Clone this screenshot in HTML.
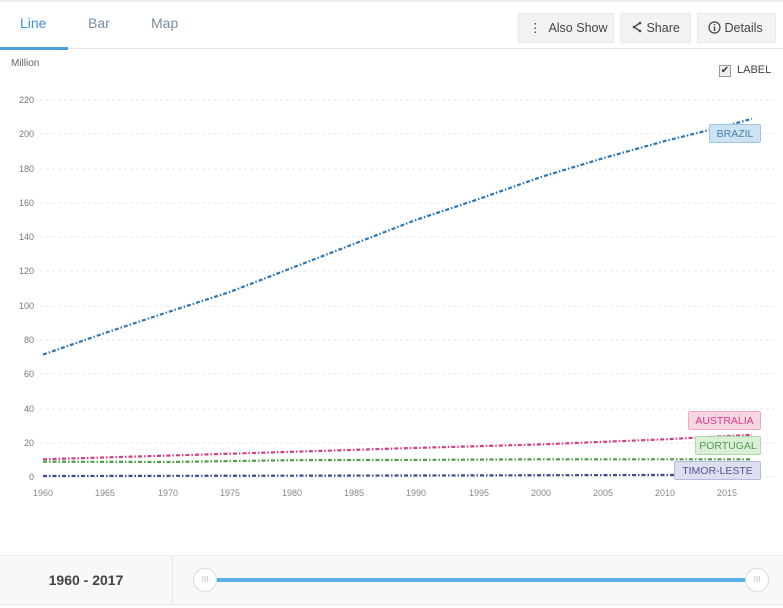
<!DOCTYPE html>
<html><head><meta charset="utf-8"><style>
*{margin:0;padding:0;box-sizing:border-box}
body{width:783px;height:608px;background:#fff;font-family:"Liberation Sans",sans-serif;position:relative;overflow:hidden;color:#555}
.top{position:absolute;left:0;top:0;width:783px;height:2px;background:#eee}
.tabs{position:absolute;left:0;top:2px;width:783px;height:47px;border-bottom:1px solid #e6e6e6}
.tab{position:absolute;top:13px;font-size:14px;color:#7a8ea3}
.act{position:absolute;left:0;top:45px;width:68px;height:3px;background:#4a9fd9}
.btn{position:absolute;top:11px;height:30px;background:#f2f3f5;border:1px solid #e8e9eb;font-size:12.5px;color:#444;line-height:28px;padding-left:10px}
.yl{position:absolute;left:0;width:34px;text-align:right;font-size:9px;color:#777}
.xl{position:absolute;top:488px;font-size:9px;color:#888;width:40px;text-align:center}
.lab{position:absolute;height:19px;font-size:10.5px;line-height:18px;text-align:center;border:1px solid;border-radius:2px}
.bot{position:absolute;left:0;top:555px;width:783px;height:50px;background:#f7f8fa;border-top:1px solid #ebebeb;border-bottom:1px solid #e6e6e6}
</style></head><body>
<div class="top"></div>
<div class="tabs">
<div class="tab" style="left:20px;color:#3a93d3">Line</div>
<div class="tab" style="left:88px">Bar</div>
<div class="tab" style="left:151px">Map</div>
<div class="act"></div>
<div class="btn" style="left:518px;width:96px">&#8942;&nbsp;&nbsp;Also Show</div>
<div class="btn" style="left:620px;width:71px"><svg width="12" height="12" viewBox="0 0 12 12" style="vertical-align:-1px"><path d="M9 2L3 6L9 10" fill="none" stroke="#444" stroke-width="1.4"/><circle cx="9" cy="2" r="1.3" fill="#444"/><circle cx="3" cy="6" r="1.3" fill="#444"/><circle cx="9" cy="10" r="1.3" fill="#444"/></svg> Share</div>
<div class="btn" style="left:697px;width:79px"><svg width="13" height="13" viewBox="0 0 13 13" style="vertical-align:-2px"><circle cx="6.5" cy="6.5" r="5.5" fill="none" stroke="#444" stroke-width="1.2"/><path d="M6.5 5.5V10M6.5 3v1.2" stroke="#444" stroke-width="1.4"/></svg> Details</div>
</div>
<div style="position:absolute;left:11px;top:58px;font-size:10px;color:#666">Million</div>
<div style="position:absolute;left:719px;top:65px;width:12px;height:12px;border:1px solid #999;background:#eee;font-size:10px;line-height:10px;text-align:center;color:#333">&#10004;</div>
<div style="position:absolute;left:737px;top:64px;font-size:11px;color:#444">LABEL</div>
<div class="yl" style="top:95px">220</div><div class="yl" style="top:129px">200</div><div class="yl" style="top:164px">180</div><div class="yl" style="top:198px">160</div><div class="yl" style="top:232px">140</div><div class="yl" style="top:266px">120</div><div class="yl" style="top:301px">100</div><div class="yl" style="top:335px">80</div><div class="yl" style="top:369px">60</div><div class="yl" style="top:404px">40</div><div class="yl" style="top:438px">20</div><div class="yl" style="top:472px">0</div>
<svg style="position:absolute;left:0;top:0" width="783" height="555">
<g stroke="#e8e8e8" stroke-dasharray="3,3" stroke-width="1">
<path d="M40 100H775M40 134H775M40 169H775M40 203H775M40 237H775M40 271H775M40 306H775M40 340H775M40 374H775M40 409H775M40 443H775M40 477H775"/></g>
<g fill="none" stroke-width="2.2" stroke-dasharray="4,2,1.5,2">
<polyline stroke="#2a78b5" points="43,354.6 105,333 167,312.4 230,291.9 292,267.9 354,243.9 416,219.9 478,199.3 541,177 603,158.2 665,141 727,125.6 752,118.8"/>
<polyline stroke="#d63c7e" points="43,459.3 167,455.6 292,451.8 416,447.9 541,444.4 665,439.3 752,434.8"/>
<polyline stroke="#4f9e45" points="43,461.7 167,462 292,460.2 416,459.9 541,459.3 752,459.3"/>
<polyline stroke="#3e4a8c" points="43,476 416,475.5 752,474.8"/>
</g></svg>
<div class="xl" style="left:23px">1960</div><div class="xl" style="left:85px">1965</div><div class="xl" style="left:148px">1970</div><div class="xl" style="left:210px">1975</div><div class="xl" style="left:272px">1980</div><div class="xl" style="left:334px">1985</div><div class="xl" style="left:396px">1990</div><div class="xl" style="left:459px">1995</div><div class="xl" style="left:521px">2000</div><div class="xl" style="left:583px">2005</div><div class="xl" style="left:645px">2010</div><div class="xl" style="left:707px">2015</div>
<div class="lab" style="left:709px;top:124px;width:52px;background:#cde3f3;border-color:#9cc7e6;color:#4a7fa8">BRAZIL</div>
<div class="lab" style="left:688px;top:411px;width:73px;background:#f8d5e3;border-color:#f0a9c6;color:#d63c7e">AUSTRALIA</div>
<div class="lab" style="left:695px;top:436px;width:66px;background:#d9efd6;border-color:#b0d9aa;color:#5a9a55">PORTUGAL</div>
<div class="lab" style="left:674px;top:461px;width:87px;background:#dcdff0;border-color:#b5bbdc;color:#50568a">TIMOR-LESTE</div>
<div class="bot">
<div style="position:absolute;left:0;top:0;width:173px;height:48px;border-right:1px solid #e6e6e6;text-align:center;line-height:48px;font-size:14px;font-weight:bold;color:#444">1960 - 2017</div>
<div style="position:absolute;left:205px;top:22px;width:552px;height:4px;background:#5aaee6"></div>
<div style="position:absolute;left:193px;top:12px;width:24px;height:24px;border-radius:50%;background:#fff;border:1px solid #ddd;font-size:8px;color:#bbb;text-align:center;line-height:22px">III</div>
<div style="position:absolute;left:745px;top:12px;width:24px;height:24px;border-radius:50%;background:#fff;border:1px solid #ddd;font-size:8px;color:#bbb;text-align:center;line-height:22px">III</div>
</div>
</body></html>
